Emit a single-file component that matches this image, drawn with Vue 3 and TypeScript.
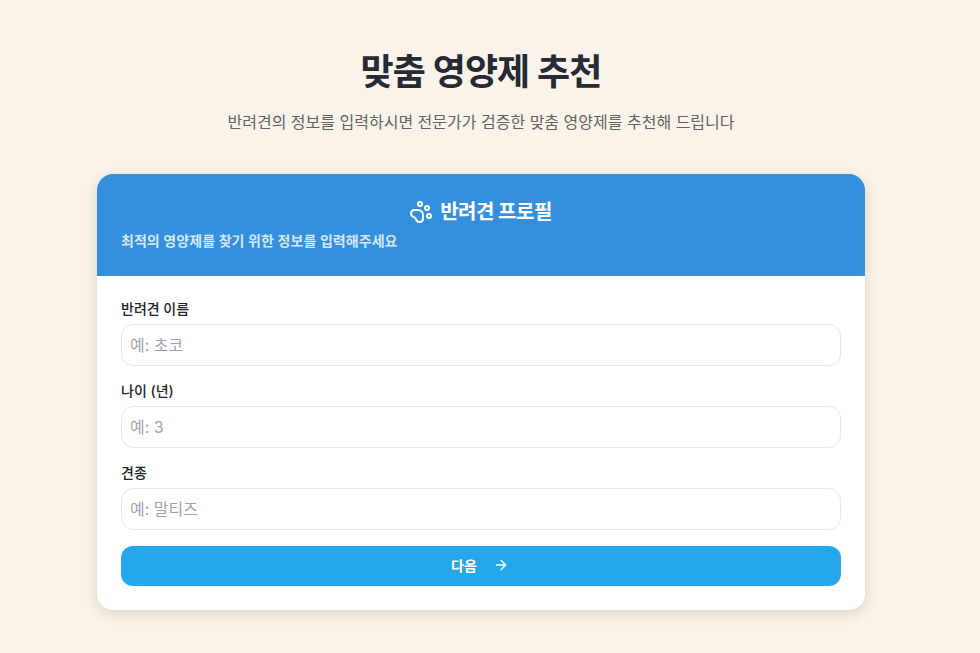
<script setup lang="ts">
interface Field { label: string; placeholder: string }
const fields: Field[] = [
  { label: '반려견 이름', placeholder: '예: 초코' },
  { label: '나이 (년)', placeholder: '예: 3' },
  { label: '견종', placeholder: '예: 말티즈' },
]
</script>

<template>
  <main class="page">
    <header class="hero">
      <h1>맞춤 영양제 추천</h1>
      <p>반려견의 정보를 입력하시면 전문가가 검증한 맞춤 영양제를 추천해 드립니다</p>
    </header>
    <section class="card">
      <div class="card-head">
        <h2>
          <svg class="paw" viewBox="0 0 24 24" width="24" height="24" fill="none" stroke="currentColor" stroke-width="2" stroke-linecap="round" stroke-linejoin="round">
            <circle cx="11" cy="4" r="2" />
            <circle cx="18" cy="8" r="2" />
            <circle cx="20" cy="16" r="2" />
            <path d="M9 10a5 5 0 0 1 5 5v3.5a3.5 3.5 0 0 1-6.84 1.045Q6.52 17.48 4.46 16.84A3.5 3.5 0 0 1 5.5 10Z" />
          </svg>
          반려견 프로필
        </h2>
        <p>최적의 영양제를 찾기 위한 정보를 입력해주세요</p>
      </div>
      <form class="card-body" @submit.prevent>
        <label v-for="f in fields" :key="f.label" class="field">
          <span>{{ f.label }}</span>
          <input type="text" :placeholder="f.placeholder" />
        </label>
        <button type="submit">
          다음
          <svg viewBox="0 0 24 24" width="16" height="16" fill="none" stroke="currentColor" stroke-width="2" stroke-linecap="round" stroke-linejoin="round">
            <path d="M5 12h14" />
            <path d="m12 5 7 7-7 7" />
          </svg>
        </button>
      </form>
    </section>
  </main>
</template>

<style>
html, body { margin: 0; background: #faf3e9; }
</style>

<style scoped>
.page {
  min-height: 653px;
  box-sizing: border-box;
  padding: 48px 18px 0 0;
  background: #faf3e9;
  font-family: Inter, "Noto Sans CJK KR", sans-serif;
  color: #212529;
}
.hero { text-align: center; margin-bottom: 40px; }
.hero h1 { margin: 0 0 14px; font-size: 36px; line-height: 48px; font-weight: 700; letter-spacing: -0.9px; color: #252a34; }
.hero p { margin: 0; font-size: 16px; line-height: 24px; color: #636363; }
.card {
  width: 768px;
  margin: 0 auto;
  border-radius: 16px;
  background: #fff;
  overflow: hidden;
  box-shadow: 0 4px 14px rgba(0, 0, 0, 0.13);
}
.card-head {
  height: 102px;
  box-sizing: border-box;
  padding: 24px 24px 0;
  background: #3490dc;
  color: #fff;
}
.card-head h2 {
  display: flex;
  align-items: center;
  justify-content: center;
  gap: 7px;
  margin: 0 1px 5px 0;
  font-size: 20px;
  line-height: 28px;
  font-weight: 700;
  letter-spacing: -0.5px;
}
.card-head p { margin: 0; font-size: 14px; line-height: 20px; font-weight: 600; letter-spacing: 0.05px; color: rgba(255,255,255,0.8); }
.card-body { display: flex; flex-direction: column; gap: 16px; padding: 24px; }
.field { display: flex; flex-direction: column; gap: 5px; }
.field span { margin-top: -1px; font-size: 14px; line-height: 20px; font-weight: 500; color: #212529; }
.field input {
  height: 42px;
  box-sizing: border-box;
  padding: 0 8px;
  border: 1px solid #e5e7eb;
  border-radius: 12px;
  background: #fff;
  font: inherit;
  font-size: 16px;
  outline: none;
}
.field input::placeholder { color: #9ca3af; }
button {
  display: flex;
  align-items: center;
  justify-content: center;
  gap: 16px;
  height: 40px;
  padding: 0 8px 2px 6px;
  border: 0;
  border-radius: 12px;
  background: #24a8eb;
  color: #fff;
  font: inherit;
  font-size: 14px;
  font-weight: 600;
}
</style>
